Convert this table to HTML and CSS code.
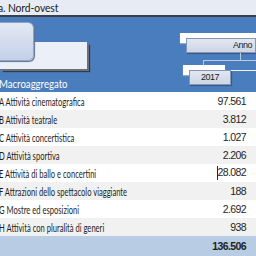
FILE: index.html
```html
<!DOCTYPE html>
<html lang="it">
<head>
  <meta charset="UTF-8" />
  <title>Spettacolo - Nord-ovest</title>
  <link rel="stylesheet" href="styles.css">
</head>
<body>
  <div class="titlebar"><span class="narrow">a. Nord-ovest</span></div>

  <div class="panel">
    <div class="slot-bar"></div>
    <div class="slot-button"></div>

    <div class="tab tab-anno"></div>
    <div class="field field-anno">Anno</div>
    <div class="link link-v1"></div>
    <div class="link link-h"></div>
    <div class="link link-v2"></div>
    <div class="tab tab-year"></div>
    <div class="field field-year">2017</div>
    <div class="link link-year"></div>

    <div class="panel-label"><span class="narrow">Macroaggregato</span></div>
  </div>

  <table class="grid">
    <colgroup><col class="col-name"><col class="col-num"></colgroup>
    <tr><td class="name"><span class="narrow">A Attività cinematografica</span></td><td class="num">97.561</td></tr>
    <tr><td class="name"><span class="narrow">B Attività teatrale</span></td><td class="num">3.812</td></tr>
    <tr><td class="name"><span class="narrow">C Attività concertistica</span></td><td class="num">1.027</td></tr>
    <tr><td class="name"><span class="narrow">D Attività sportiva</span></td><td class="num">2.206</td></tr>
    <tr><td class="name"><span class="narrow">E Attività di ballo e concertini</span></td><td class="num"><span class="caret"></span>28.082</td></tr>
    <tr><td class="name"><span class="narrow">F Attrazioni dello spettacolo viaggiante</span></td><td class="num">188</td></tr>
    <tr><td class="name"><span class="narrow">G Mostre ed esposizioni</span></td><td class="num">2.692</td></tr>
    <tr><td class="name"><span class="narrow">H Attività con pluralità di generi</span></td><td class="num">938</td></tr>
    <tr class="total"><td class="name"></td><td class="num">136.506</td></tr>
  </table>
</body>
</html>
```

FILE: styles.css
```css
body {
  margin: 0;
  width: 256px;
  height: 256px;
  overflow: hidden;
  background: #ffffff;
  font-family: Lato, "Open Sans", sans-serif;
  color: #1e1e1e;
}
/* Calibri-like narrow labels */
.narrow {
  display: inline-block;
  white-space: nowrap;
  transform: scaleX(0.8);
  transform-origin: left center;
}
.titlebar {
  height: 15px;
  line-height: 15px;
  background: #e7ebf3;
  border-bottom: 2px solid #3c3f45;
  font-size: 12px;
  letter-spacing: -0.1px;
  margin-left: -2px;
  color: #1a1a1a;
}
.titlebar .narrow {
  transform: scaleX(0.86);
}

/* blue slicer area */
.panel {
  position: relative;
  height: 75px;
  background: #4a7dbd;
  overflow: hidden;
}
.slot-bar {
  position: absolute;
  left: 0;
  top: 25px;
  width: 87px;
  height: 27px;
  background: #ebeff7;
  box-shadow: 2px 2px 0 #6b6f78, 3px 3px 1px #2f3b52;
}
.slot-button {
  position: absolute;
  left: -8px;
  top: 5px;
  width: 40px;
  height: 37px;
  border-radius: 6px;
  border: 1px solid #8ea3c6;
  background: linear-gradient(#e3e9f4, #c3d0e6);
  box-shadow: 1px 1px 1px #5f7296;
}
.tab {
  position: absolute;
  background: #ffffff;
  box-shadow: 0 1px 1px #9aa7bf;
}
.tab-anno {
  left: 180px;
  top: 16px;
  width: 80px;
  height: 10px;
}
.tab-year {
  left: 183px;
  top: 48px;
  width: 42px;
  height: 10px;
}
.field {
  position: absolute;
  height: 13px;
  line-height: 13px;
  border: 1px solid #8596b4;
  background: linear-gradient(#e2e7f1, #cdd6e6);
  font-family: "Liberation Sans", Arial, sans-serif;
  font-size: 9px;
  letter-spacing: -0.5px;
  color: #222;
  box-shadow: 1px 1px 1px #3d5987;
}
.field-anno {
  left: 186px;
  top: 21px;
  width: 65px;
  padding-right: 3px;
  text-align: right;
}
.field-year {
  left: 189px;
  top: 53px;
  width: 40px;
  text-align: center;
}
.link {
  position: absolute;
  background: #b9c9e2;
}
.link-v1 {
  left: 240px;
  top: 36px;
  width: 1px;
  height: 7px;
}
.link-h {
  left: 203px;
  top: 43px;
  width: 60px;
  height: 1px;
}
.link-v2 {
  left: 203px;
  top: 43px;
  width: 1px;
  height: 5px;
}
.link-year {
  left: 231px;
  top: 53px;
  width: 30px;
  height: 1px;
  background: #f2f5fa;
}
.panel-label {
  position: absolute;
  left: -1px;
  bottom: 1px;
  color: #ffffff;
  font-size: 12px;
}

/* data rows */
.grid {
  width: 256px;
  table-layout: fixed;
  border-collapse: collapse;
}
.col-name {
  width: 196px;
}
.col-num {
  width: 60px;
}
.grid td {
  height: 18px;
  padding: 0;
  font-size: 11.5px;
}
.grid tr:nth-child(even) td {
  background: #f1f1f1;
}
.grid .name .narrow {
  margin-left: -1px;
  transform: scaleX(0.66);
}
.grid .num {
  text-align: right;
  padding-right: 10px;
  font-family: "Liberation Sans", Arial, sans-serif;
  font-size: 10.5px;
  letter-spacing: -0.6px;
}
.grid .total td {
  height: 20px;
  background: #b8cce4;
  font-weight: bold;
}
.caret {
  display: inline-block;
  vertical-align: middle;
  width: 1px;
  height: 14px;
  margin-right: -1px;
  background: #1c2a4a;
}
```
